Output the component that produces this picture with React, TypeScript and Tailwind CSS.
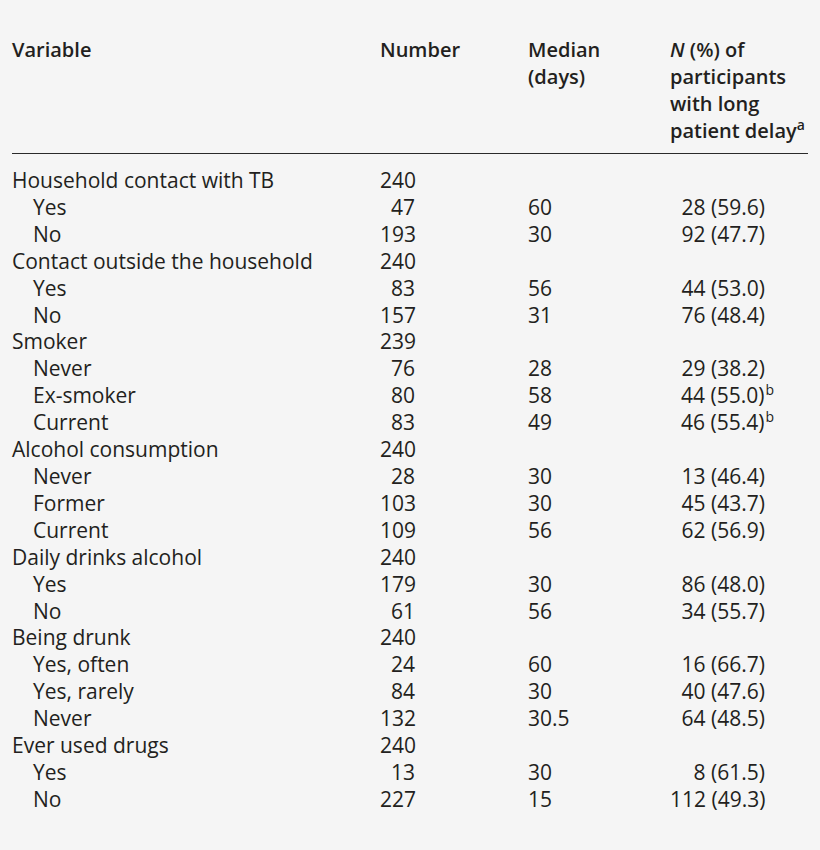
import React from 'react';

type Row = {
  label: string;
  sub?: boolean;
  n: string;
  median?: string;
  delay?: string;
  sup?: string;
};

const rows: Row[] = [
  { label: 'Household contact with TB', n: '240' },
  { label: 'Yes', sub: true, n: '47', median: '60', delay: '28 (59.6)' },
  { label: 'No', sub: true, n: '193', median: '30', delay: '92 (47.7)' },
  { label: 'Contact outside the household', n: '240' },
  { label: 'Yes', sub: true, n: '83', median: '56', delay: '44 (53.0)' },
  { label: 'No', sub: true, n: '157', median: '31', delay: '76 (48.4)' },
  { label: 'Smoker', n: '239' },
  { label: 'Never', sub: true, n: '76', median: '28', delay: '29 (38.2)' },
  { label: 'Ex-smoker', sub: true, n: '80', median: '58', delay: '44 (55.0)', sup: 'b' },
  { label: 'Current', sub: true, n: '83', median: '49', delay: '46 (55.4)', sup: 'b' },
  { label: 'Alcohol consumption', n: '240' },
  { label: 'Never', sub: true, n: '28', median: '30', delay: '13 (46.4)' },
  { label: 'Former', sub: true, n: '103', median: '30', delay: '45 (43.7)' },
  { label: 'Current', sub: true, n: '109', median: '56', delay: '62 (56.9)' },
  { label: 'Daily drinks alcohol', n: '240' },
  { label: 'Yes', sub: true, n: '179', median: '30', delay: '86 (48.0)' },
  { label: 'No', sub: true, n: '61', median: '56', delay: '34 (55.7)' },
  { label: 'Being drunk', n: '240' },
  { label: 'Yes, often', sub: true, n: '24', median: '60', delay: '16 (66.7)' },
  { label: 'Yes, rarely', sub: true, n: '84', median: '30', delay: '40 (47.6)' },
  { label: 'Never', sub: true, n: '132', median: '30.5', delay: '64 (48.5)' },
  { label: 'Ever used drugs', n: '240' },
  { label: 'Yes', sub: true, n: '13', median: '30', delay: '8 (61.5)' },
  { label: 'No', sub: true, n: '227', median: '15', delay: '112 (49.3)' },
];

const App: React.FC = () => {
  return (
    <div
      className="w-[820px] h-[850px] bg-[#f5f5f5] text-[#231f20] pt-[36px] px-[12px]"
      style={{ fontFamily: '"Open Sans", "Noto Sans", sans-serif' }}
    >
      {/* Header */}
      <div className="grid grid-cols-[368px_148px_142px_138px] font-semibold text-[20px] leading-[27px] pb-[9px] border-b-[1.5px] border-[#2a2a2a]">
        <div>Variable</div>
        <div>Number</div>
        <div>
          Median
          <br />
          (days)
        </div>
        <div>
          <i>N</i> (%) of
          <br />
          participants
          <br />
          with long
          <br />
          patient delay<sup className="text-[14px] leading-none -top-[0.6em]">a</sup>
        </div>
      </div>

      {/* Body */}
      <div className="pt-[13px] text-[21px] leading-[26.9px]">
        {rows.map((r, i) => (
          <div key={i} className="grid grid-cols-[368px_148px_142px_138px]">
            <div className={r.sub ? 'pl-[21px]' : ''}>{r.label}</div>
            <div className="w-[35px] text-right">{r.n}</div>
            <div>{r.median}</div>
            <div className="text-right pr-[43px] whitespace-nowrap">
              {r.delay}
              {r.sup && (
                <sup className="text-[14px] leading-none -top-[0.6em] pl-[1px] -mr-[9px]">{r.sup}</sup>
              )}
            </div>
          </div>
        ))}
      </div>
    </div>
  );
};

export default App;
